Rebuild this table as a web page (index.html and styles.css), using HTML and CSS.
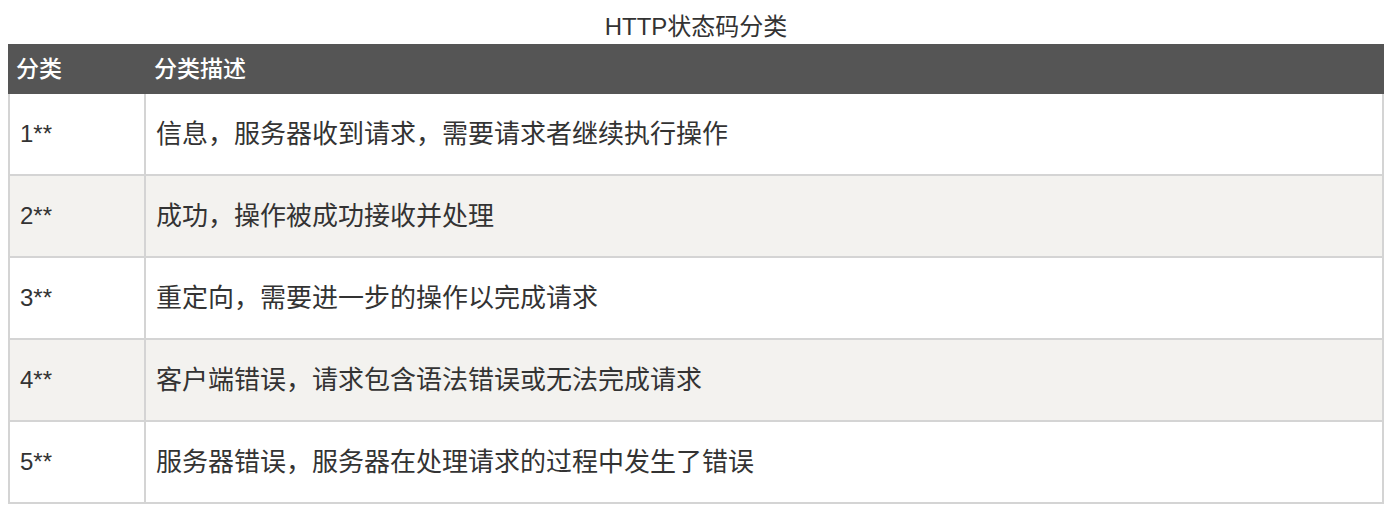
FILE: index.html
```html
<!DOCTYPE html>
<html lang="zh-CN">
<head>
<meta charset="utf-8">
<title>HTTP状态码分类</title>
<link rel="stylesheet" href="styles.css">
</head>
<body>
<table class="status-table">
  <caption class="status-caption">HTTP状态码分类</caption>
  <thead>
    <tr class="head-row">
      <th class="col-code">分类</th>
      <th class="col-desc">分类描述</th>
    </tr>
  </thead>
  <tbody>
    <tr class="row"><td class="cell-code">1**</td><td class="cell-desc">信息，服务器收到请求，需要请求者继续执行操作</td></tr>
    <tr class="row alt"><td class="cell-code">2**</td><td class="cell-desc">成功，操作被成功接收并处理</td></tr>
    <tr class="row"><td class="cell-code">3**</td><td class="cell-desc">重定向，需要进一步的操作以完成请求</td></tr>
    <tr class="row alt"><td class="cell-code">4**</td><td class="cell-desc">客户端错误，请求包含语法错误或无法完成请求</td></tr>
    <tr class="row"><td class="cell-code">5**</td><td class="cell-desc">服务器错误，服务器在处理请求的过程中发生了错误</td></tr>
  </tbody>
</table>
</body>
</html>
```

FILE: styles.css
```css
html, body {
  margin: 0;
  padding: 0;
  background: #fff;
}
body {
  padding: 8px 10px 8px 8px;
  font-family: "Liberation Sans", "Noto Sans CJK SC", sans-serif;
  font-size: 24px;
  color: #333;
}
.status-table {
  width: 1376px;
  border-collapse: separate;
  border-spacing: 0;
  table-layout: fixed;
}
.status-caption {
  height: 36px;
  line-height: 38px;
  font-size: 24px;
  color: #333;
  text-align: center;
}
.head-row th {
  height: 50px;
  padding: 0 8px;
  background: #555;
  color: #fff;
  font-weight: 500;
  font-size: 23px;
  line-height: 26px;
  text-align: left;
  vertical-align: middle;
}
.col-code {
  width: 138px;
  box-sizing: border-box;
}
.row td {
  height: 80px;
  padding: 0 10px;
  vertical-align: middle;
  border-bottom: 2px solid #d4d4d4;
  background: #fff;
  line-height: 30px;
  color: #333;
}
.row.alt td {
  background: #f3f2ef;
}
.row .cell-code {
  font-size: 24px;
  border-left: 2px solid #d4d4d4;
  border-right: 2px solid #d4d4d4;
}
.row .cell-desc {
  font-size: 26px;
  border-right: 2px solid #d4d4d4;
  padding-left: 10px;
}
```
